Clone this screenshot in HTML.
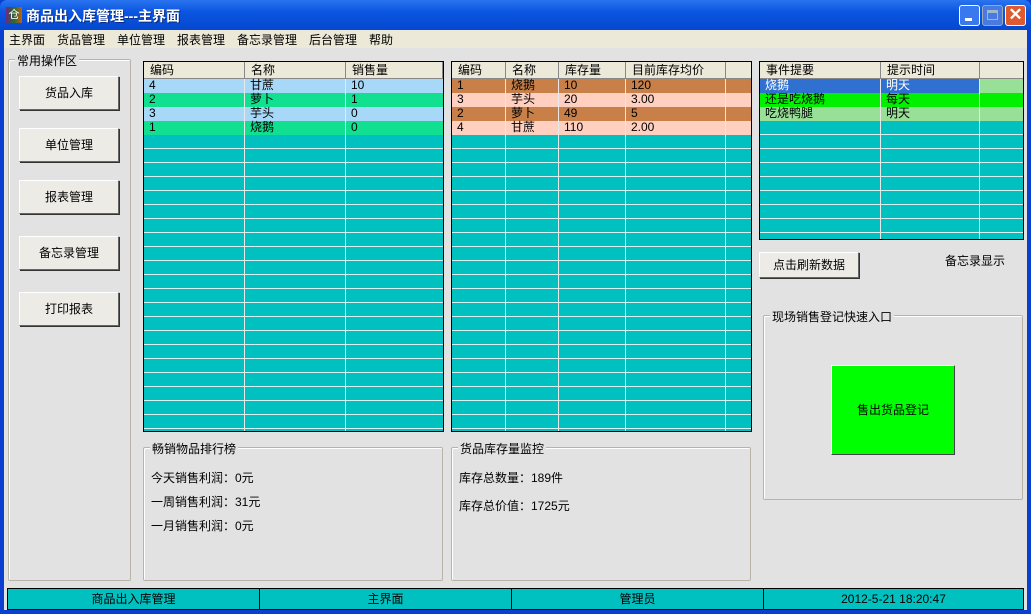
<!DOCTYPE html>
<html><head><meta charset="utf-8"><style>
*{box-sizing:border-box;margin:0;padding:0}
body{width:1031px;height:614px;overflow:hidden;background:#0a3fd0;font-family:"Liberation Sans","Noto Sans CJK SC",sans-serif;font-size:12px;position:relative;color:#000}
.a{position:absolute}
#title{left:0;top:0;width:1031px;height:30px;background:linear-gradient(#2a74f0,#0a55e0 40%,#0648d0);border-radius:7px 7px 0 0}
#client{left:4px;top:30px;width:1023px;height:580px;background:#e2e2e2}
#menu{left:4px;top:30px;width:1023px;height:18px;background:#ece9d8}
#menu span{position:absolute;top:1px;font-size:12px}
.grp{border:1px solid #b8b5a8;border-radius:2px;box-shadow:inset 1px 1px 0 #fff}
.grp .lg{position:absolute;top:-8px;left:6px;background:#e2e2e2;padding:0 2px}
.btn{background:#ecebe6;border:1px solid;border-color:#fff #666 #666 #fff;box-shadow:1px 1px 0 #333;text-align:center;font-size:12px}
.grid{background:#00c0c0;border:1px solid #000;overflow:hidden}
.grid .rows{position:absolute;left:0;right:0;top:17px;bottom:0;background:repeating-linear-gradient(#00c0c0 0,#00c0c0 13px,#d8f0f0 13px,#d8f0f0 14px)}
.hd{position:absolute;top:0;height:17px;background:#ece9d8;border-right:1px solid #888;border-bottom:1px solid #888;padding-left:6px;line-height:16px}
.vl{position:absolute;top:17px;bottom:0;width:1px;background:#e8e8e8}
.r{position:absolute;left:0;right:0;height:14px;line-height:13px}
.r span{position:absolute;padding-left:5px}
.st{position:absolute;top:588px;height:22px;background:#00c0c0;border:1px solid #000;text-align:center;line-height:20px}
</style></head><body>
<div class="a" id="title">
 <div class="a" style="left:6px;top:7px;width:16px;height:16px;background:linear-gradient(90deg,#6a2a80,#2a6a30,#c06010);color:#fff;font-size:11px;line-height:16px;text-align:center">仓</div>
 <div class="a" style="left:26px;top:6px;color:#fff;font-size:14px;font-weight:bold;text-shadow:1px 1px #0a2a80">商品出入库管理---主界面</div>
 <div class="a" style="left:959px;top:5px;width:21px;height:21px;border:1px solid #fff;border-radius:3px;background:#3a78f0"><div class="a" style="left:5px;top:12px;width:7px;height:3px;background:#fff"></div></div>
 <div class="a" style="left:982px;top:5px;width:21px;height:21px;border:1px solid #9ab;border-radius:3px;background:#4a7ae0"><div class="a" style="left:4px;top:4px;width:11px;height:10px;border:1px solid #9bc;border-top-width:3px"></div></div>
 <div class="a" style="left:1005px;top:5px;width:21px;height:21px;border:1px solid #fff;border-radius:3px;background:#e05a30;color:#fff;font-size:17px;line-height:18px;text-align:center;font-weight:bold">✕</div>
</div>
<div class="a" id="client"></div>
<div class="a" id="menu">
 <span style="left:5px">主界面</span><span style="left:53px">货品管理</span><span style="left:113px">单位管理</span><span style="left:173px">报表管理</span><span style="left:233px">备忘录管理</span><span style="left:305px">后台管理</span><span style="left:365px">帮助</span>
</div>

<div class="a grp" style="left:8px;top:59px;width:123px;height:522px"><span class="lg">常用操作区</span></div>
<div class="a btn" style="left:19px;top:76px;width:100px;height:34px;line-height:32px">货品入库</div>
<div class="a btn" style="left:19px;top:128px;width:100px;height:34px;line-height:32px">单位管理</div>
<div class="a btn" style="left:19px;top:180px;width:100px;height:34px;line-height:32px">报表管理</div>
<div class="a btn" style="left:19px;top:236px;width:100px;height:34px;line-height:32px">备忘录管理</div>
<div class="a btn" style="left:19px;top:292px;width:100px;height:34px;line-height:32px">打印报表</div>

<!-- grid1 -->
<div class="a grid" style="left:143px;top:61px;width:301px;height:371px">
 <div class="rows"></div>
 <div class="hd" style="left:0;width:101px">编码</div><div class="hd" style="left:101px;width:101px">名称</div><div class="hd" style="left:202px;width:97px">销售量</div>
 <div class="r" style="top:17px;background:#a8d8f8"><span style="left:0">4</span><span style="left:101px">甘蔗</span><span style="left:202px">10</span></div>
 <div class="r" style="top:31px;background:#10e090"><span style="left:0">2</span><span style="left:101px">萝卜</span><span style="left:202px">1</span></div>
 <div class="r" style="top:45px;background:#a8d8f8"><span style="left:0">3</span><span style="left:101px">芋头</span><span style="left:202px">0</span></div>
 <div class="r" style="top:59px;background:#10e090"><span style="left:0">1</span><span style="left:101px">烧鹅</span><span style="left:202px">0</span></div>
 <div class="vl" style="left:100px"></div><div class="vl" style="left:201px"></div>
</div>
<!-- grid2 -->
<div class="a grid" style="left:451px;top:61px;width:301px;height:371px">
 <div class="rows"></div>
 <div class="hd" style="left:0;width:54px">编码</div><div class="hd" style="left:54px;width:53px">名称</div><div class="hd" style="left:107px;width:67px">库存量</div><div class="hd" style="left:174px;width:100px">目前库存均价</div><div class="hd" style="left:274px;width:27px"></div>
 <div class="r" style="top:17px;background:#c88048"><span style="left:0">1</span><span style="left:54px">烧鹅</span><span style="left:107px">10</span><span style="left:174px">120</span></div>
 <div class="r" style="top:31px;background:#ffd0c0"><span style="left:0">3</span><span style="left:54px">芋头</span><span style="left:107px">20</span><span style="left:174px">3.00</span></div>
 <div class="r" style="top:45px;background:#c88048"><span style="left:0">2</span><span style="left:54px">萝卜</span><span style="left:107px">49</span><span style="left:174px">5</span></div>
 <div class="r" style="top:59px;background:#ffd0c0"><span style="left:0">4</span><span style="left:54px">甘蔗</span><span style="left:107px">110</span><span style="left:174px">2.00</span></div>
 <div class="vl" style="left:53px"></div><div class="vl" style="left:106px"></div><div class="vl" style="left:173px"></div><div class="vl" style="left:273px"></div>
</div>
<!-- grid3 -->
<div class="a grid" style="left:759px;top:61px;width:265px;height:179px">
 <div class="rows"></div>
 <div class="hd" style="left:0;width:121px">事件提要</div><div class="hd" style="left:121px;width:99px">提示时间</div><div class="hd" style="left:220px;width:45px"></div>
 <div class="r" style="top:17px;background:#98e098"><span style="left:0;width:121px;background:#3070d0;color:#fff;height:14px">烧鹅</span><span style="left:121px;width:99px;background:#3070d0;color:#fff;height:14px">明天</span></div>
 <div class="r" style="top:31px;background:#00f000"><span style="left:0">还是吃烧鹅</span><span style="left:121px">每天</span></div>
 <div class="r" style="top:45px;background:#98e098"><span style="left:0">吃烧鸭腿</span><span style="left:121px">明天</span></div>
 <div class="vl" style="left:120px"></div><div class="vl" style="left:219px"></div>
</div>

<div class="a btn" style="left:759px;top:252px;width:100px;height:26px;line-height:24px">点击刷新数据</div>
<div class="a" style="left:945px;top:252px">备忘录显示</div>

<div class="a grp" style="left:763px;top:315px;width:260px;height:185px"><span class="lg">现场销售登记快速入口</span></div>
<div class="a" style="left:831px;top:365px;width:124px;height:90px;background:#00ff00;border:1px solid;border-color:#fff #444 #444 #fff;text-align:center;line-height:88px">售出货品登记</div>

<div class="a grp" style="left:143px;top:447px;width:300px;height:134px"><span class="lg">畅销物品排行榜</span>
 <div class="a" style="left:7px;top:21px">今天销售利润：0元</div>
 <div class="a" style="left:7px;top:45px">一周销售利润：31元</div>
 <div class="a" style="left:7px;top:69px">一月销售利润：0元</div>
</div>
<div class="a grp" style="left:451px;top:447px;width:300px;height:134px"><span class="lg">货品库存量监控</span>
 <div class="a" style="left:7px;top:21px">库存总数量：189件</div>
 <div class="a" style="left:7px;top:49px">库存总价值：1725元</div>
</div>

<div class="st" style="left:7px;width:253px">商品出入库管理</div>
<div class="st" style="left:259px;width:253px">主界面</div>
<div class="st" style="left:511px;width:253px">管理员</div>
<div class="st" style="left:763px;width:261px">2012-5-21 18:20:47</div>
</body></html>
